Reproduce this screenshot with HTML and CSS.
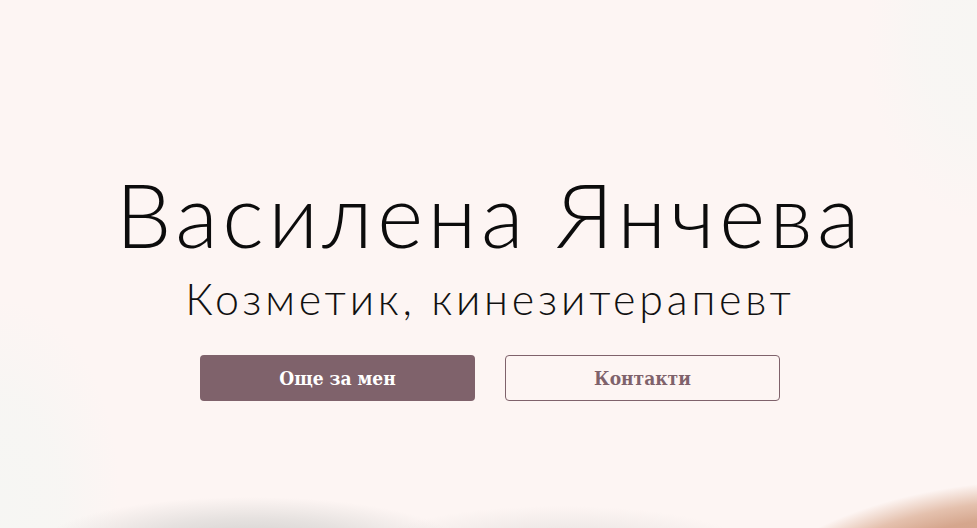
FILE: index.html
```html
<!DOCTYPE html>
<html lang="bg">
<head>
<meta charset="utf-8">
<title>Василена Янчева</title>
<link rel="stylesheet" href="styles.css">
</head>
<body>
<section class="hero">
  <div class="hero-content">
    <h1 class="hero-title">Василена Янчева</h1>
    <p class="hero-subtitle">Козметик, кинезитерапевт</p>
    <div class="hero-actions">
      <a class="btn btn-primary" href="#about">Още за мен</a>
      <a class="btn btn-outline" href="#contacts">Контакти</a>
    </div>
  </div>
</section>
</body>
</html>
```
FILE: styles.css
```css
html, body {
  margin: 0;
  padding: 0;
}
body {
  font-family: "Lato", "Noto Sans", sans-serif;
  background: #fdf5f3;
  color: #111;
}
.hero {
  height: 528px;
  display: flex;
  align-items: flex-start;
  justify-content: center;
  overflow: hidden;
  background:
    radial-gradient(ellipse 330px 165px at 1050px 645px, #cc9d87 0%, #d5a68d 78%, rgba(220,175,150,0.75) 88%, rgba(240,215,200,0) 100%),
    radial-gradient(ellipse 210px 48px at 250px 545px, rgba(208,206,204,1) 0%, rgba(220,217,215,0.7) 55%, rgba(240,238,236,0) 100%),
    radial-gradient(ellipse 190px 42px at 560px 548px, rgba(220,217,215,0.8) 0%, rgba(240,238,236,0) 100%),
    radial-gradient(ellipse 120px 200px at 0px 500px, rgba(246,246,243,1) 0%, rgba(246,246,243,0.8) 50%, rgba(246,246,243,0) 100%),
    radial-gradient(ellipse 110px 180px at 977px 40px, rgba(247,246,243,1) 0%, rgba(247,246,243,0.8) 50%, rgba(247,246,243,0) 100%),
    #fdf5f3;
}
.hero-content {
  display: flex;
  flex-direction: column;
  align-items: center;
  padding-top: 164px;
  margin-left: 3px;
}
.hero-title {
  margin: 0;
  font-family: "Lato", sans-serif;
  font-weight: 300;
  font-size: 88px;
  line-height: 100px;
  letter-spacing: 4.5px;
  color: #0c0c0c;
}
.hero-subtitle {
  margin: 10px 0 0;
  font-family: "Lato", sans-serif;
  font-weight: 300;
  font-size: 43px;
  line-height: 50px;
  letter-spacing: 3.8px;
  color: #111;
}
.hero-actions {
  display: flex;
  gap: 30px;
  margin-top: 31px;
}
.btn {
  box-sizing: border-box;
  width: 275px;
  height: 46px;
  display: flex;
  align-items: center;
  justify-content: center;
  border-radius: 4px;
  font-family: "DejaVu Serif Condensed", "DejaVu Serif", serif;
  font-weight: bold;
  font-size: 19px;
  text-decoration: none;
}
.btn-primary {
  background: #7f626b;
  color: #fff;
}
.btn-outline {
  border: 1px solid #7f626b;
  color: #7f626b;
}
```
